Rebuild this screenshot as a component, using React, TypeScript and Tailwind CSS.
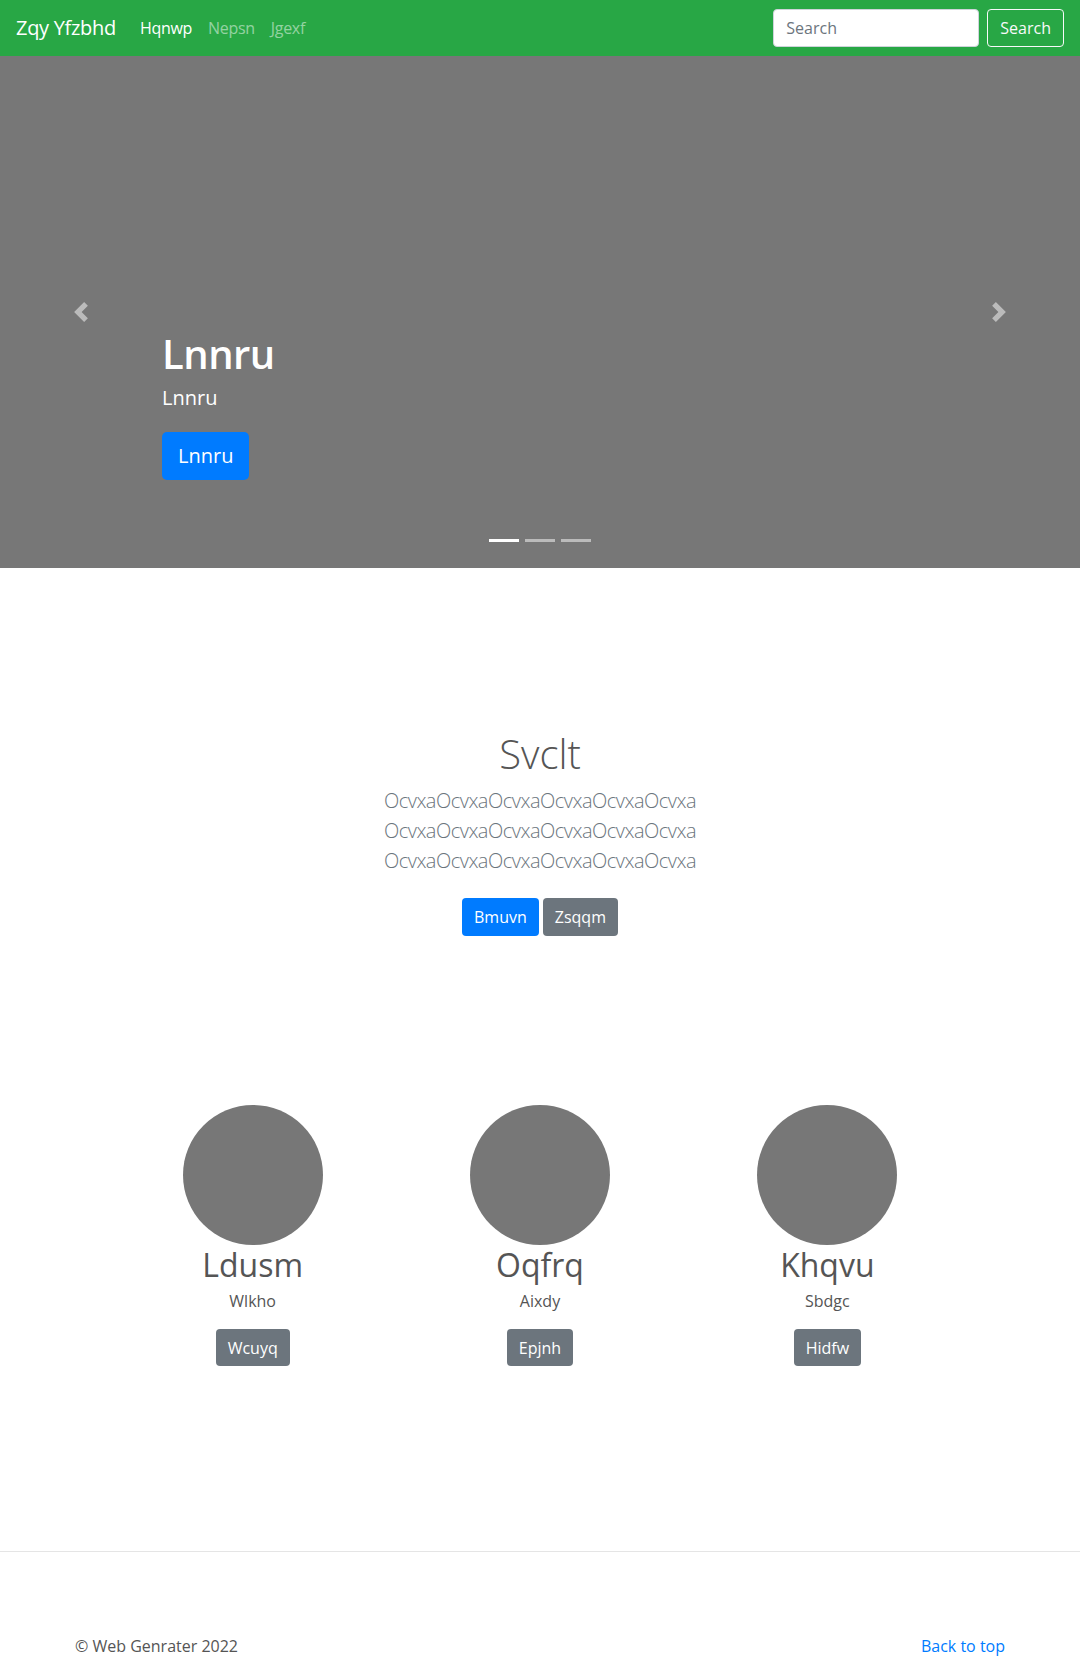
import React from "react";

const font = { fontFamily: '"Open Sans", "Noto Sans", "Liberation Sans", sans-serif' };

const Chevron = ({ dir }: { dir: "left" | "right" }) => (
  <svg width="20" height="20" viewBox="0 0 8 8" fill="#fff" className="opacity-50">
    {dir === "left" ? (
      <path d="M5.25 0l-4 4 4 4 1.5-1.5L4.25 4l2.5-2.5L5.25 0z" />
    ) : (
      <path d="M2.75 0l-1.5 1.5L3.75 4l-2.5 2.5L2.75 8l4-4-4-4z" />
    )}
  </svg>
);

const people = [
  { name: "Ldusm", sub: "Wlkho", btn: "Wcuyq" },
  { name: "Oqfrq", sub: "Aixdy", btn: "Epjnh" },
  { name: "Khqvu", sub: "Sbdgc", btn: "Hidfw" },
];

export default function App() {
  return (
    <div className="w-full bg-white text-[#212529]" style={font}>
      {/* navbar */}
      <nav className="flex h-14 items-center bg-[#28a745] px-4">
        <span className="mr-4 text-[20px] leading-[30px] tracking-[-0.3px] text-white">Zqy Yfzbhd</span>
        <ul className="flex items-center tracking-[-0.3px]">
          <li className="px-2 text-[16px] text-white">Hqnwp</li>
          <li className="px-2 text-[16px] text-white/50">Nepsn</li>
          <li className="px-2 text-[16px] text-white/50">Jgexf</li>
        </ul>
        <div className="ml-auto flex items-center gap-2">
          <input
            placeholder="Search"
            className="h-[38px] w-[206px] rounded border border-[#ced4da] bg-white px-3 text-[16px] text-[#495057] placeholder:text-[#6c757d] outline-none"
          />
          <button className="h-[38px] rounded border border-[#f8f9fa] px-3 text-[16px] text-[#f8f9fa]">
            Search
          </button>
        </div>
      </nav>

      {/* carousel */}
      <div className="relative h-[512px] bg-[#777]">
        <div className="absolute inset-y-0 left-0 flex w-[15%] items-center justify-center">
          <Chevron dir="left" />
        </div>
        <div className="absolute inset-y-0 right-0 flex w-[15%] items-center justify-center">
          <Chevron dir="right" />
        </div>
        <div className="absolute left-[15%] right-[15%] top-[274px] text-white">
          <h1 className="text-[40px] font-semibold leading-[48px] tracking-[-0.5px]">Lnnru</h1>
          <p className="mt-[6px] text-[20px] leading-[28px]">Lnnru</p>
          <button className="mt-[20px] h-12 rounded-[5px] bg-[#007bff] px-4 text-[20px] text-white">
            Lnnru
          </button>
        </div>
        <div className="absolute left-0 right-0 top-[483px] flex justify-center gap-[6px]">
          <span className="h-[3px] w-[30px] bg-white" />
          <span className="h-[3px] w-[30px] bg-white/50" />
          <span className="h-[3px] w-[30px] bg-white/50" />
        </div>
      </div>

      {/* jumbotron */}
      <section className="pt-[162px] text-center">
        <h1 className="text-[40px] font-light leading-[48px] text-[#555]">Svclt</h1>
        <p className="mt-2 text-[20px] font-light leading-[30px] tracking-[-0.5px] text-[#6c757d]">
          <span className="block">OcvxaOcvxaOcvxaOcvxaOcvxaOcvxa</span>
          <span className="block">OcvxaOcvxaOcvxaOcvxaOcvxaOcvxa</span>
          <span className="block">OcvxaOcvxaOcvxaOcvxaOcvxaOcvxa</span>
        </p>
        <div className="mt-[22px] flex justify-center gap-1">
          <button className="h-[38px] rounded bg-[#007bff] px-3 text-[16px] text-white">Bmuvn</button>
          <button className="h-[38px] rounded bg-[#6c757d] px-3 text-[16px] text-white">Zsqqm</button>
        </div>
      </section>

      {/* marketing */}
      <section className="mx-auto mt-[169px] grid w-[862px] grid-cols-3 text-center">
        {people.map((p) => (
          <div key={p.name} className="flex flex-col items-center">
            <div className="h-[140px] w-[140px] rounded-full bg-[#777]" />
            <h2 className="mt-[1px] text-[32px] leading-[38px] text-[#555]">{p.name}</h2>
            <p className="mt-[5px] text-[16px] leading-[24px] text-[#555]">{p.sub}</p>
            <button className="mt-4 h-[37px] rounded bg-[#6c757d] px-3 text-[16px] text-white">
              {p.btn}
            </button>
          </div>
        ))}
      </section>

      {/* footer */}
      <footer className="mt-[185px] border-t border-[#e5e5e5] pt-[82px]">
        <div className="mx-auto flex w-[960px] justify-between px-[15px] pb-12 text-[16px] leading-[24px]">
          <p className="text-[#555]">© Web Genrater 2022</p>
          <a href="#" className="text-[#007bff]">Back to top</a>
        </div>
      </footer>
    </div>
  );
}
